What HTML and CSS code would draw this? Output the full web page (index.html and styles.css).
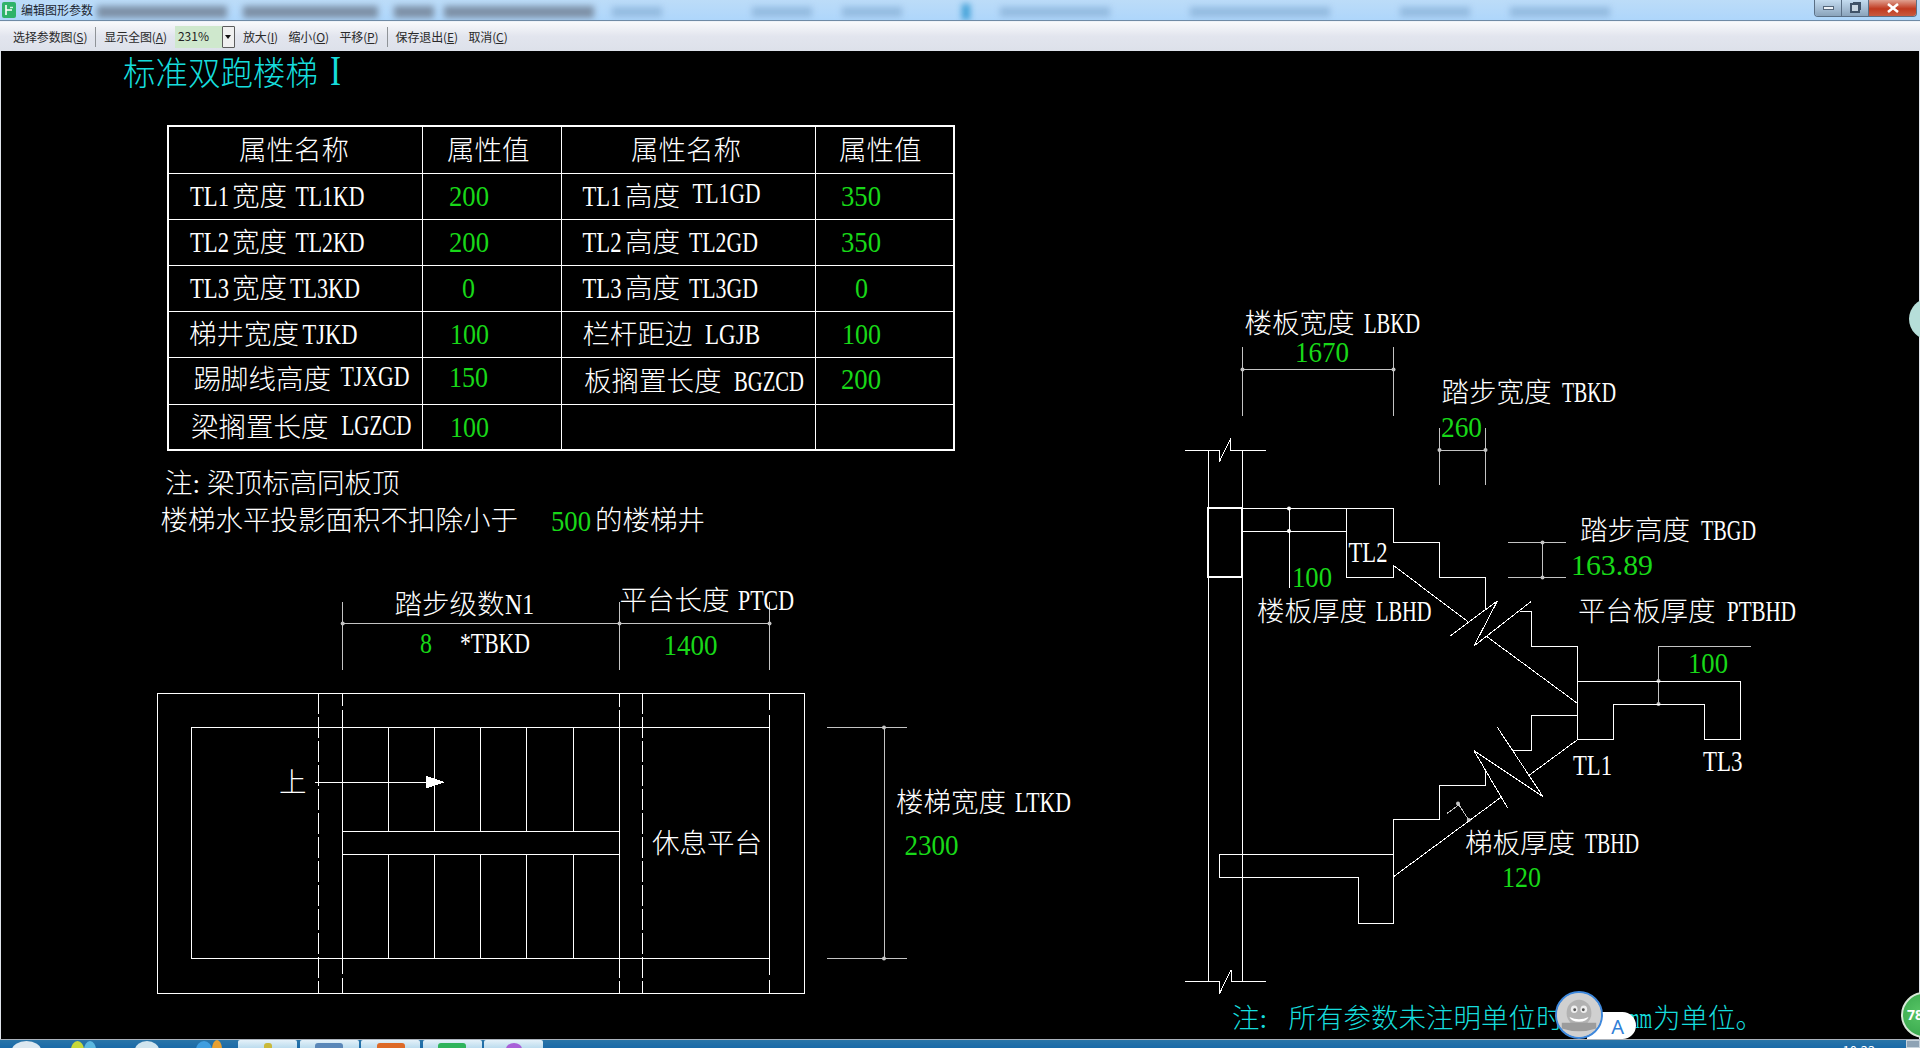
FILE: index.html
```html
<!DOCTYPE html>
<html lang="zh-CN">
<head>
<meta charset="utf-8">
<title>编辑图形参数</title>
<link rel="stylesheet" href="styles.css">
</head>
<body>
<div class="window">
  <header class="titlebar">
    <svg class="appicon" viewBox="0 0 14 16"><rect width="14" height="16" rx="2" fill="#2fb36a"/><path d="M4 3v10M4 8h6M4 3h0" stroke="#fff" stroke-width="1.6" fill="none"/><path d="M8 5.5h3" stroke="#d8f5e4" stroke-width="1.4"/></svg>
    <span class="apptitle">编辑图形参数</span>
    <div class="blurred">
      <i class="bl d w1"></i><i class="bl d w2"></i><i class="bl d w3"></i><i class="bl d w4"></i>
      <i class="bl l w5"></i><i class="bl l w6"></i><i class="bl l w7"></i><i class="bl a w8"></i><i class="bl l w9"></i><i class="bl l w10"></i><i class="bl l w11"></i><i class="bl l w12"></i>
    </div>
    <div class="winbtns">
      <span class="wb"><i class="min"></i></span>
      <span class="wb"><i class="res"></i></span>
      <span class="wb close"><svg viewBox="0 0 12 10" class="x"><path d="M1 1l10 8M11 1L1 9" stroke="#fff" stroke-width="2.6"/></svg></span>
    </div>
  </header>
  <nav class="toolbar">
    <span class="tool">选择参数图(<u>S</u>)</span>
    <span class="sep"></span>
    <span class="tool">显示全图(<u>A</u>)</span>
    <span class="combo"><span class="comboval">231%</span><span class="combobtn"><i class="caret"></i></span></span>
    <span class="tool">放大(<u>I</u>)</span>
    <span class="tool more">缩小(<u>O</u>)</span>
    <span class="tool more">平移(<u>P</u>)</span>
    <span class="sep"></span>
    <span class="tool">保存退出(<u>E</u>)</span>
    <span class="tool more">取消(<u>C</u>)</span>
  </nav>
  <main class="canvas">
    <svg class="cad" viewBox="0 51 1918 988" width="1918" height="988">
      <!-- title -->
      <text class="c big" y="85"><tspan x="123">标准双跑楼梯</tspan> <tspan class="bigi" x="330" textLength="11" lengthAdjust="spacingAndGlyphs">I</tspan></text>

      <!-- parameter table -->
      <path class="ln thick" d="M168 126H954V450H168Z"/>
      <path class="ln" d="M168 173H954M168 219H954M168 265H954M168 311H954M168 357H954M168 404H954M422.500 126V450M561 126V450M815 126V450"/>
      <text class="w" x="239" y="160">属性名称</text>
      <text class="w" x="447" y="160">属性值</text>
      <text class="w" x="631" y="160">属性名称</text>
      <text class="w" x="839" y="160">属性值</text>

      <text class="w" y="206"><tspan x="190" textLength="39" lengthAdjust="spacingAndGlyphs">TL1</tspan><tspan x="232">宽度</tspan> <tspan x="295.500" textLength="69" lengthAdjust="spacingAndGlyphs">TL1KD</tspan></text>
      <text class="g" x="449" y="206" textLength="40" lengthAdjust="spacingAndGlyphs">200</text>
      <text class="w" y="206"><tspan x="582.500" textLength="39" lengthAdjust="spacingAndGlyphs">TL1</tspan><tspan x="625">高度</tspan> <tspan x="692.500" y="203" textLength="68" lengthAdjust="spacingAndGlyphs">TL1GD</tspan></text>
      <text class="g" x="841" y="206" textLength="40" lengthAdjust="spacingAndGlyphs">350</text>

      <text class="w" y="252"><tspan x="190" textLength="39" lengthAdjust="spacingAndGlyphs">TL2</tspan><tspan x="232">宽度</tspan> <tspan x="295.500" textLength="69" lengthAdjust="spacingAndGlyphs">TL2KD</tspan></text>
      <text class="g" x="449" y="252" textLength="40" lengthAdjust="spacingAndGlyphs">200</text>
      <text class="w" y="252"><tspan x="582.500" textLength="39" lengthAdjust="spacingAndGlyphs">TL2</tspan><tspan x="625">高度</tspan> <tspan x="689" textLength="69" lengthAdjust="spacingAndGlyphs">TL2GD</tspan></text>
      <text class="g" x="841" y="252" textLength="40" lengthAdjust="spacingAndGlyphs">350</text>

      <text class="w" y="298"><tspan x="190" textLength="39" lengthAdjust="spacingAndGlyphs">TL3</tspan><tspan x="232">宽度</tspan><tspan x="290" textLength="70" lengthAdjust="spacingAndGlyphs">TL3KD</tspan></text>
      <text class="g" x="462" y="298" textLength="13" lengthAdjust="spacingAndGlyphs">0</text>
      <text class="w" y="298"><tspan x="582.500" textLength="39" lengthAdjust="spacingAndGlyphs">TL3</tspan><tspan x="625">高度</tspan> <tspan x="689" textLength="69" lengthAdjust="spacingAndGlyphs">TL3GD</tspan></text>
      <text class="g" x="855" y="298" textLength="13" lengthAdjust="spacingAndGlyphs">0</text>

      <text class="w" y="344"><tspan x="189">梯井宽度</tspan><tspan x="302.500" textLength="55" lengthAdjust="spacingAndGlyphs">TJKD</tspan></text>
      <text class="g" x="450" y="344" textLength="39" lengthAdjust="spacingAndGlyphs">100</text>
      <text class="w" y="344"><tspan x="582.500">栏杆距边</tspan> <tspan x="705" textLength="55" lengthAdjust="spacingAndGlyphs">LGJB</tspan></text>
      <text class="g" x="842" y="344" textLength="39" lengthAdjust="spacingAndGlyphs">100</text>

      <text class="w" y="389"><tspan x="193.500">踢脚线高度</tspan> <tspan x="340.500" y="386" textLength="69" lengthAdjust="spacingAndGlyphs">TJXGD</tspan></text>
      <text class="g" x="449" y="387" textLength="39" lengthAdjust="spacingAndGlyphs">150</text>
      <text class="w" y="391"><tspan x="584">板搁置长度</tspan> <tspan x="734" textLength="70" lengthAdjust="spacingAndGlyphs">BGZCD</tspan></text>
      <text class="g" x="841" y="389" textLength="40" lengthAdjust="spacingAndGlyphs">200</text>

      <text class="w" y="437"><tspan x="191">梁搁置长度</tspan> <tspan x="341.500" y="435" textLength="70" lengthAdjust="spacingAndGlyphs">LGZCD</tspan></text>
      <text class="g" x="450" y="437" textLength="39" lengthAdjust="spacingAndGlyphs">100</text>

      <!-- notes -->
      <text class="w" y="493"><tspan x="165">注:</tspan><tspan x="207">梁顶标高同板顶</tspan></text>
      <text class="w" x="160.500" y="530">楼梯水平投影面积不扣除小于</text>
      <text class="g" x="551" y="531" textLength="40" lengthAdjust="spacingAndGlyphs">500</text>
      <text class="w" x="595" y="530">的楼梯井</text>

      <!-- plan: dimensions -->
      <path class="ln dm" d="M342.700 602V670M619.500 602V670M769.500 602V670M342.700 623.500H769.500M827 727.500H907M827 958.500H907M884 727.500V958.500"/>
      <g class="dot"><circle cx="342.700" cy="623.500" r="2"/><circle cx="619.500" cy="623.500" r="2"/><circle cx="769.500" cy="623.500" r="2"/><circle cx="884" cy="727.500" r="2"/><circle cx="884" cy="958.500" r="2"/></g>
      <text class="w" y="614"><tspan x="394.500">踏步级数</tspan><tspan x="505" textLength="29" lengthAdjust="spacingAndGlyphs">N1</tspan></text>
      <text class="w" y="610"><tspan x="619.500">平台长度</tspan> <tspan x="738" textLength="56" lengthAdjust="spacingAndGlyphs">PTCD</tspan></text>
      <text class="g" x="420" y="653" textLength="12" lengthAdjust="spacingAndGlyphs">8</text>
      <text class="w" x="460" y="652.500" textLength="70" lengthAdjust="spacingAndGlyphs">*TBKD</text>
      <text class="g" x="663.500" y="655" textLength="54" lengthAdjust="spacingAndGlyphs">1400</text>
      <text class="w" y="811.500"><tspan x="896">楼梯宽度</tspan> <tspan x="1015" textLength="56" lengthAdjust="spacingAndGlyphs">LTKD</tspan></text>
      <text class="g" x="904.500" y="855" textLength="54" lengthAdjust="spacingAndGlyphs">2300</text>

      <!-- plan: drawing -->
      <path class="ln" d="M157 693H804.500V993.500H157ZM191.500 727.500H769.500V958.500H191.500ZM342.700 693V706M342.700 710V974M342.700 978V993.500M619.500 693V707M619.500 710V978M619.500 981V993.500M769.500 693V710M769.500 715V975M769.500 980V993.500M388.500 727.500V831M434.500 727.500V831M480.500 727.500V831M526.500 727.500V831M573.500 727.500V831M388.500 854.500V958.500M434.500 854.500V958.500M480.500 854.500V958.500M526.500 854.500V958.500M573.500 854.500V958.500M342.700 831H619.500M342.700 854.500H619.500"/>
      <path class="ln da" d="M318.800 693V993.500M642.700 693V993.500"/>
      <path class="ln" d="M314.500 782H426"/>
      <path class="solid" d="M426 776V788.500L445 782Z"/>
      <text class="w" x="279" y="792">上</text>
      <text class="w" x="652" y="853">休息平台</text>

      <!-- section: dimensions -->
      <path class="ln dm" d="M1242.500 347V416M1393.500 347V416M1242.500 369.500H1393.500M1439.500 428V485M1485.500 428V485M1439.500 450H1485.500M1508 542.500H1566M1508 577.500H1566M1542.500 542.500V577.500M1658.500 646V704.500M1658.500 646H1750.500M1447 813.500L1460.500 803.500M1458 803.500L1468.800 820"/>
      <path class="ln" d="M1289 507V587.500"/>
      <g class="dot"><circle cx="1242.500" cy="369.500" r="2"/><circle cx="1393.500" cy="369.500" r="2"/><circle cx="1439.500" cy="450" r="2"/><circle cx="1485.500" cy="450" r="2"/><circle cx="1542.500" cy="542.500" r="2"/><circle cx="1542.500" cy="577.500" r="2"/><circle cx="1658.500" cy="681" r="2"/><circle cx="1658.500" cy="704" r="2"/><circle cx="1458" cy="803.500" r="2"/><circle cx="1468.800" cy="820" r="2"/><circle class="wdot" cx="1289" cy="508.500" r="2"/><circle class="wdot" cx="1289" cy="531" r="2"/></g>

      <!-- section: drawing -->
      <path class="ln" d="M1185 450.500H1219.500V461.500L1230.700 438.500V450.500H1265.500M1208.500 450.500V981M1242.500 450.500V981M1185 981.500H1219.500V993.500L1231 970V981.500H1265.500"/>
      <path class="ln thick" d="M1208 508H1242V576.700H1208Z"/>
      <path class="ln" d="M1242 508.700H1393.500V542.500H1439.500V577.500H1485.500V610M1242 531.500H1346.500M1346.500 508.700V577.500H1393.500V565.500L1468 621.700"/>
      <path class="ln" d="M1450.500 635.700L1497.500 600.700L1474 646L1530.800 601.700"/>
      <path class="ln" d="M1486 636L1577 703M1520 611.700H1531V646H1577.800V739.500"/>
      <path class="ln" d="M1577.800 681.500H1740V739.500H1704.500V704.500H1613V739.500H1577.800L1529.500 775"/>
      <path class="ln" d="M1497.500 727.500L1543 796.700L1474 750.700L1507.500 807.700"/>
      <path class="ln" d="M1577.800 715.500H1531.500V750.500H1512.500M1485.700 771V785.500H1439.700V819.500H1393.500V923.500H1358.700V877.500H1219.500V854.700H1393.500M1393.500 876.700L1501.700 796.700"/>

      <!-- section: labels -->
      <text class="w" y="333"><tspan x="1244.500">楼板宽度</tspan> <tspan x="1364" textLength="56" lengthAdjust="spacingAndGlyphs">LBKD</tspan></text>
      <text class="g" x="1295" y="361.500" textLength="54" lengthAdjust="spacingAndGlyphs">1670</text>
      <text class="w" y="402"><tspan x="1441.500">踏步宽度</tspan> <tspan x="1562" textLength="54" lengthAdjust="spacingAndGlyphs">TBKD</tspan></text>
      <text class="g" x="1441" y="436.500" textLength="41" lengthAdjust="spacingAndGlyphs">260</text>
      <text class="w" y="540"><tspan x="1580">踏步高度</tspan> <tspan x="1701" textLength="55" lengthAdjust="spacingAndGlyphs">TBGD</tspan></text>
      <text class="g" x="1571" y="575" textLength="82" lengthAdjust="spacingAndGlyphs">163.89</text>
      <text class="w" x="1348.500" y="561.500" textLength="39" lengthAdjust="spacingAndGlyphs">TL2</text>
      <text class="g" x="1292" y="586.500" textLength="40" lengthAdjust="spacingAndGlyphs">100</text>
      <text class="w" y="621"><tspan x="1257">楼板厚度</tspan> <tspan x="1376" textLength="55.500" lengthAdjust="spacingAndGlyphs">LBHD</tspan></text>
      <text class="w" y="620.500"><tspan x="1578">平台板厚度</tspan> <tspan x="1727" textLength="69" lengthAdjust="spacingAndGlyphs">PTBHD</tspan></text>
      <text class="g" x="1688" y="672.500" textLength="40" lengthAdjust="spacingAndGlyphs">100</text>
      <text class="w" x="1573" y="775" textLength="39" lengthAdjust="spacingAndGlyphs">TL1</text>
      <text class="w" x="1703" y="770.500" textLength="39.500" lengthAdjust="spacingAndGlyphs">TL3</text>
      <text class="w" y="852.500"><tspan x="1465">梯板厚度</tspan> <tspan x="1585" textLength="54" lengthAdjust="spacingAndGlyphs">TBHD</tspan></text>
      <text class="g" x="1502" y="886.500" textLength="39" lengthAdjust="spacingAndGlyphs">120</text>

      <text class="c" y="1028"><tspan x="1232">注:</tspan><tspan x="1288.500">所有参数未注明单位时,以</tspan><tspan x="1627" textLength="25" lengthAdjust="spacingAndGlyphs">mm</tspan><tspan x="1653">为单位。</tspan></text>
    </svg>
    <div class="floatball">
      <span class="pill">A</span>
      <span class="qq">
        <svg viewBox="0 0 46 46" class="qqface"><circle cx="23" cy="23" r="23" fill="#d0d0d0"/><ellipse cx="23" cy="21" rx="13" ry="14" fill="#b2b2b2"/><ellipse cx="18" cy="17" rx="3.500" ry="4" fill="#eee"/><ellipse cx="28" cy="17" rx="3.500" ry="4" fill="#eee"/><circle cx="18.500" cy="17.500" r="1.500" fill="#555"/><circle cx="27.500" cy="17.500" r="1.500" fill="#555"/><path d="M13 25q10 5 20 0q-2 5-10 5t-10-5z" fill="#fff"/><path d="M5 31h36v6q-18 6-36 0z" fill="#9c9c9c"/></svg>
      </span>
    </div>
    <span class="ball green">78</span>
    <span class="ball teal"></span>
  </main>
  <footer class="taskbar">
    <i class="peek orb"></i>
    <i class="peek p1"></i><i class="peek p2"></i>
    <i class="peek p3"></i>
    <i class="peek p4"></i><i class="peek p5"></i>
    <span class="tab"><i class="chip cy"></i></span>
    <span class="tab"><i class="chip cb"></i></span>
    <span class="tab"><i class="chip co"></i></span>
    <span class="tab"><i class="chip cg"></i></span>
    <span class="tab"><i class="chip cp"></i></span>
    <span class="clock">10:33</span>
    <span class="showdesk"></span>
  </footer>
</div>
</body>
</html>
```

FILE: styles.css
```css
* { box-sizing: border-box; }
html, body { margin: 0; height: 100%; overflow: hidden; background: #000; }
body { font-family: "Noto Sans CJK SC", "Noto Sans", sans-serif; font-size: 12px; color: #222; }

.window { display: flex; flex-direction: column; height: 1048px; width: 1920px; }

/* title bar */
.titlebar { height: 21px; flex: none; display: flex; align-items: center; padding-left: 2px; background: linear-gradient(#bcdcf8, #aed6fb); border-bottom: 1px solid #6f8aa5; position: relative; overflow: hidden; }
.appicon { width: 14px; height: 16px; flex: none; }
.apptitle { margin-left: 5px; font-size: 12px; color: #1d2630; line-height: 20px; flex: none; }
.blurred { display: flex; align-items: center; gap: 10px; margin-left: 4px; margin-top: 3px; filter: blur(3px); height: 14px; }
.bl { display: block; height: 12px; }
.bl.d { background: #7d90a6; }
.bl.l { background: #94bbe0; height: 10px; }
.bl.a { background: #3d9fd6; height: 16px; }
.w1 { width: 130px; }
.w2 { width: 135px; margin-left: 6px; }
.w3 { width: 40px; margin-left: 6px; }
.w4 { width: 150px; }
.w5 { width: 50px; margin-left: 8px; }
.w6 { width: 60px; margin-left: 80px; }
.w7 { width: 60px; margin-left: 20px; }
.w8 { width: 8px; margin-left: 50px; }
.w9 { width: 110px; margin-left: 20px; }
.w10 { width: 140px; margin-left: 70px; }
.w11 { width: 70px; margin-left: 60px; }
.w12 { width: 100px; margin-left: 30px; }
.winbtns { margin-left: auto; margin-right: 3px; display: flex; height: 17px; align-self: flex-start; border: 1px solid #5a6f85; border-top: 0; border-radius: 0 0 4px 4px; overflow: hidden; }
.wb { width: 27px; display: flex; align-items: center; justify-content: center; background: linear-gradient(#c4dcf0, #8aa3bb); border-right: 1px solid #5a6f85; }
.wb.close { width: 47px; background: linear-gradient(#e0a090, #c03a20 55%, #c85a40); border-right: 0; }
.min { display: block; width: 11px; height: 4px; background: #eef3f8; border: 1px solid #55677a; }
.res { display: block; width: 10px; height: 10px; border: 2px solid #3f5267; background: #c8d6e2; box-shadow: 2px -2px 0 -1px #3f5267; }
.x { width: 12px; height: 10px; }

/* toolbar */
.toolbar { height: 30px; flex: none; display: flex; align-items: center; gap: 8px; padding: 0 0 0 13px; background: linear-gradient(#f8f9fb, #e2e5ee 50%, #dde1ea); border-top: 1px solid #eef2f8; position: relative; white-space: nowrap; color: #2a2a2a; }
.toolbar u { text-decoration: underline; }
.tool { font-size: 12px; line-height: 20px; flex: none; letter-spacing: -0.12px; }
.tool.more { margin-left: 2.500px; }
.sep { width: 1px; height: 20px; background: #8f9398; flex: none; }
.combo { width: 60px; height: 22px; display: flex; flex: none; background: #cfe8cd; }
.comboval { flex: 1; padding-left: 3px; font-size: 12px; line-height: 20px; color: #222; }
.combobtn { width: 13px; display: flex; align-items: center; justify-content: center; background: #f0f0f0; border: 1px solid #5c5c5c; border-radius: 1px; }
.caret { width: 0; height: 0; border-style: solid; border-width: 4px 3px 0; border-color: #111 transparent transparent; }

/* CAD canvas */
.canvas { flex: 1; min-height: 0; background: #000; border-left: 1px solid #dfe3ea; border-right: 1px solid #dfe3ea; position: relative; }
.cad { display: block; position: absolute; left: -1px; top: 0; shape-rendering: crispEdges; }
.cad text { font-family: "Liberation Serif", "Noto Sans CJK SC", serif; font-size: 27.500px; font-weight: 300; }
.cad [textLength] { font-size: 30px; }
.cad .w { fill: #fff; }
.cad .g { fill: #18d818; }
.cad .c { fill: #16dcdc; }
.cad .big { font-size: 32.500px; }
.cad .bigi { font-size: 42px; }
.ln { fill: none; stroke: #fff; stroke-width: 1; }
.thick { stroke-width: 2; }
.dm { stroke: #c4c4c4; }
.da { stroke-dasharray: 21 3; }
.solid { fill: #fff; }
.dot circle { fill: #c4c4c4; shape-rendering: auto; }
.dot .wdot { fill: #fff; }

/* floating widgets */
.floatball { position: absolute; left: 1554px; top: 940px; width: 82px; height: 48px; }
.pill { position: absolute; left: 32px; top: 21px; width: 49px; height: 27px; background: #fff; border-radius: 0 14px 14px 0; color: #2f7fd8; font-family: "Noto Sans", sans-serif; font-size: 20px; line-height: 29px; text-align: right; padding-right: 12px; }
.qq { position: absolute; left: 0; top: 0; width: 48px; height: 48px; border-radius: 50%; border: 2px solid #3e88dc; overflow: hidden; background: #d0d0d0; }
.qqface { display: block; width: 100%; height: 100%; }
.ball { position: absolute; border-radius: 50%; }
.green { left: 1900px; top: 941px; width: 46px; height: 46px; background: radial-gradient(circle at 40% 45%, #57c565, #2e9e45); border: 2px solid #d8e8d8; color: #fff; font-family: "Noto Sans", sans-serif; font-weight: 700; font-size: 14px; line-height: 42px; padding-left: 4px; }
.teal { left: 1908px; top: 247px; width: 42px; height: 42px; background: #b6ded9; }

/* taskbar */
.taskbar { height: 9px; flex: none; display: flex; align-items: flex-start; overflow: hidden; background: linear-gradient(#2a75a8, #1a6aa8); border-top: 1px solid #aab2bb; position: relative; padding-left: 12px; }
.peek { display: block; flex: none; height: 18px; border-radius: 50%; margin-top: 1px; }
.orb { width: 29px; background: #dce8f0; }
.p1 { width: 13px; margin-left: 30px; background: #c7d93a; }
.p2 { width: 12px; background: #5bb8e0; }
.p3 { width: 24px; margin-left: 39px; background: #cfe4ee; }
.p4 { width: 16px; margin-left: 37px; background: #3f9ee0; }
.p5 { width: 10px; background: #e8a030; margin-top: 0; }
.tab { width: 59px; height: 8px; margin-left: 2.500px; flex: none; display: flex; justify-content: center; background: linear-gradient(#e4f1f9, #bcdcee); border-radius: 2px 2px 0 0; margin-top: 0; }
.peek.p5 + .tab { margin-left: 16px; }
.chip { display: block; width: 28px; height: 12px; margin-top: 3px; border-radius: 3px; }
.cy { width: 8px; background: #c9b93a; }
.cb { background: #5a87b8; }
.co { background: #dd6a28; }
.cg { background: #2fb45c; }
.cp { width: 16px; background: #a860d8; border-radius: 50%; }
.clock { margin-left: auto; margin-right: 31px; color: #fff; font-size: 13px; line-height: 22px; flex: none; margin-top: 0; }
.showdesk { width: 14px; height: 8px; background: #8da2b4; flex: none; border: 1px solid #c6d2dc; }
```
